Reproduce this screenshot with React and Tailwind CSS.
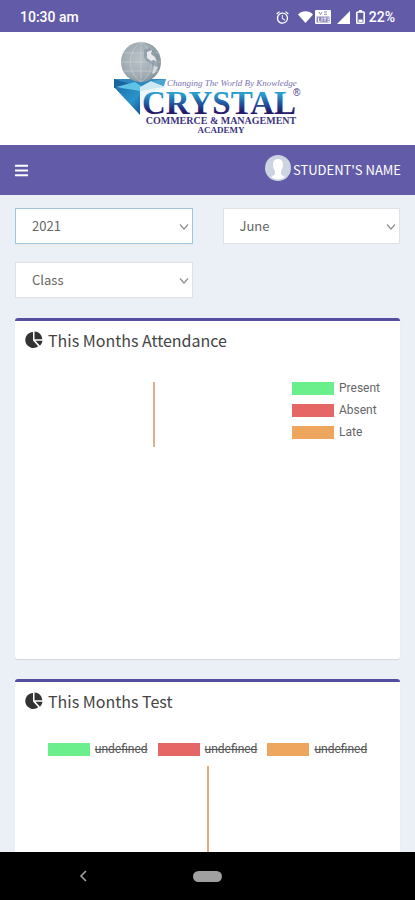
import { useState } from "react";
import { FaBars } from "react-icons/fa";
import { MdAlarm } from "react-icons/md";

const LEGEND_COLORS = {
    green: "bg-[#6bee8c]",
    red: "bg-[#e66565]",
    orange: "bg-[#eea65e]",
};

const attendanceLegend = [
    { color: "green", label: "Present" },
    { color: "red", label: "Absent" },
    { color: "orange", label: "Late" },
];

const testLegend = [
    { color: "green", label: "undefined" },
    { color: "red", label: "undefined" },
    { color: "orange", label: "undefined" },
];

const StatusBar = () => (
    <div className="flex h-8 shrink-0 items-center justify-between bg-[#625ca8] pl-5 pr-5 pt-0.5 font-['Roboto',sans-serif] text-sm font-medium text-white">
        <span>10:30 am</span>
        <div className="flex items-center">
            <MdAlarm size={15} className="mr-2" />
            <svg width="15" height="12" viewBox="0 0 15 12" fill="currentColor" aria-hidden="true">
                <path d="M7.500 12 0 3.400C4-.8 11-.8 15 3.400Z" />
            </svg>
            <svg width="16" height="14" viewBox="0 0 16 14" className="ml-0.5 mr-1.5" aria-hidden="true">
                <rect width="16" height="14" rx="1" fill="#fff" />
                <path d="M4 2 5.500 4.500 7 2M9 2h3M9 4.300h3" stroke="#8d88c4" fill="none" />
                <rect x="1.500" y="6.500" width="13" height="6" fill="#8d88c4" />
                <path d="M3.500 7.500v4h2M7 7.500v4M8.500 8h3M10 8v3.500M12.500 8h1.500M12.500 9.700h1.500M12.500 11.500h1.500" stroke="#fff" strokeWidth="0.900" fill="none" />
            </svg>
            <svg width="13" height="13" viewBox="0 0 13 13" fill="currentColor" className="mr-1.5" aria-hidden="true">
                <path d="M13 0V13H0Z" />
            </svg>
            <svg width="9" height="14" viewBox="0 0 9 14" aria-hidden="true">
                <path d="M3 0h3v2H3Z" fill="#fff" />
                <rect x="0.800" y="2" width="7.400" height="11.200" rx="0.800" stroke="#fff" strokeWidth="1.600" fill="none" />
                <path d="M2.500 9.500h4V12h-4Z" fill="#fff" />
            </svg>
            <span className="ml-1">22%</span>
        </div>
    </div>
);

const Logo = () => (
    <svg width="190" height="98" viewBox="0 0 190 98" role="img" aria-label="Crystal Commerce and Management Academy">
        <defs>
            <linearGradient id="word" x1="0" y1="0" x2="0" y2="1">
                <stop offset="0.25" stopColor="#2b9ed0" />
                <stop offset="0.5" stopColor="#2259a2" />
                <stop offset="0.75" stopColor="#231a68" />
            </linearGradient>
            <radialGradient id="globe" cx="0.45" cy="0.45" r="0.6">
                <stop offset="0" stopColor="#b9c2c7" />
                <stop offset="0.7" stopColor="#a0acb3" />
                <stop offset="1" stopColor="#7d8b93" />
            </radialGradient>
            <linearGradient id="gem" x1="0" y1="0" x2="1" y2="1">
                <stop offset="0" stopColor="#1a6fae" />
                <stop offset="0.6" stopColor="#2a93cb" />
                <stop offset="1" stopColor="#13528f" />
            </linearGradient>
        </defs>

        {/* crystal */}
        <path d="M1 46 27 49V74Z" fill="url(#gem)" />
        <path d="M1 38H53L50 46 27 50 1 47Z" fill="#2d86bd" />
        <path d="M1 38 27 46 1 47Z" fill="#1b659f" />
        <path d="M3 46 22 41 28 45 27 50Z" fill="#5fc3e6" />
        <path d="M27 46 38 40 53 46 27 50Z" fill="#cdeaf3" />
        <path d="M38 40 53 38 51 45Z" fill="#4aa5d0" />
        <path d="M27 50 50 46 32 56 27 72Z" fill="#eef8fb" />

        {/* globe */}
        <circle cx="28" cy="21" r="20" fill="url(#globe)" />
        <path
            d="M8 21h40M10.500 12h35M10.500 30h35M28 1v40M28 1C14 10 14 32 28 41M28 1C42 10 42 32 28 41"
            stroke="#ccd3d7"
            strokeWidth="0.600"
            fill="none"
        />
        <path d="M31 9 36 7 42 10 46 16 45 22 42 21 40 25 37 22 33 20 31 15Z" fill="#7b8a93" opacity="0.500" />
        <path d="M34 11 39 9 38 13 42 16 44 21 41 19 38 20 34 17Z" fill="#e6eaec" />
        <path d="M41 25 45 26 42 32 39 33Z" fill="#d5dbde" />

        <text x="54" y="45" fontFamily="'Liberation Serif', serif" fontStyle="italic" fontSize="9" fill="#7a72b3">
            Changing The World By Knowledge
        </text>
        <text x="29" y="73" fontFamily="'Liberation Serif', serif" fontWeight="700" fontSize="33" fill="url(#word)">
            CRYSTAL
        </text>
        <text x="180" y="55" fontFamily="'Liberation Sans', sans-serif" fontSize="10" fill="#3c357f">
            ®
        </text>
        <text x="108" y="83" textAnchor="middle" fontFamily="'Liberation Serif', serif" fontWeight="700" fontSize="10" fill="#3b357f">
            COMMERCE &amp; MANAGEMENT
        </text>
        <text x="108" y="92" textAnchor="middle" fontFamily="'Liberation Serif', serif" fontWeight="700" fontSize="9" fill="#3b357f">
            ACADEMY
        </text>
    </svg>
);

const Navbar = () => (
    <nav className="flex h-[50px] shrink-0 items-center justify-between bg-[#625ca8] px-3.5 text-white">
        <button aria-label="Toggle menu">
            <FaBars size={15} />
        </button>
        <a href="#profile" className="flex items-center gap-0.5 text-[13px]">
            <svg width="26" height="26" viewBox="0 0 26 26" className="-mt-1" aria-hidden="true">
                <circle cx="13" cy="13" r="13" fill="#ccd4e2" />
                <path d="M13 4C9.500 4 8 6.500 8 10c0 2.500.8 4.500 2 5.800v3.200c-1 1.500-2.500 1.800-4 3A11.500 11.500 0 0 0 20 22c-1.500-1.200-3-1.500-4-3v-3.200c1.200-1.300 2-3.300 2-5.800C18 6.500 16.500 4 13 4Z" fill="#fff" />
            </svg>
            <span>STUDENT'S NAME</span>
        </a>
    </nav>
);

const Select = ({ label, options, active }) => {
    const [value, setValue] = useState(options[0]);

    return (
        <div className="relative">
            <select
                aria-label={label}
                value={value}
                onChange={(e) => setValue(e.target.value)}
                className={`h-9 w-full appearance-none border bg-white pl-4 pr-8 text-[13px] text-[#666] outline-none ${active ? "border-[#9fc4dd]" : "border-[#dfe3e9]"}`}
            >
                {options.map((option) => (
                    <option key={option}>{option}</option>
                ))}
            </select>
            <svg width="10" height="6" viewBox="0 0 10 6" className="pointer-events-none absolute right-1 top-4" aria-hidden="true">
                <path d="M1 0.500 5 5 9 0.500" stroke="#8f8f8f" strokeWidth="1.200" fill="none" />
            </svg>
        </div>
    );
};

const PieIcon = () => (
    <svg width="18" height="18" viewBox="0 0 18 18" fill="#333" aria-hidden="true">
        <path d="M8 1A8 8 0 1 0 13.200 15.300L8 9.500Z" />
        <path d="M9.500 0.500A8 8 0 0 1 17.300 8.300H9.500Z" />
        <path d="M10.500 9.800H17.500A8 8 0 0 1 15 14.800Z" />
    </svg>
);

const LegendItem = ({ color, label, hidden }) => (
    <li className="flex items-center gap-[5px]">
        <span className={`h-[13px] w-[42px] ${LEGEND_COLORS[color]}`}></span>
        <span className={hidden ? "line-through" : ""}>{label}</span>
    </li>
);

const Box = ({ title, className, children }) => (
    <section className={`rounded-[3px] border-t-[3px] border-[#554d9f] bg-white px-2.5 shadow-[0_1px_1px_rgba(0,0,0,0.1)] ${className}`}>
        <h3 className="flex h-[38px] items-center gap-[5px] text-base text-[#444]">
            <PieIcon />
            {title}
        </h3>
        {children}
    </section>
);

const App = () => {
    return (
        <div className="flex h-screen flex-col overflow-hidden bg-[#ebeff6] font-['Noto_Sans_CJK_SC',sans-serif]">
            <StatusBar />

            <header className="flex shrink-0 justify-center bg-white pb-1.5 pt-[9px]">
                <Logo />
            </header>

            <Navbar />

            <main className="min-h-0 flex-1 overflow-hidden px-[15px] pt-[13px]">
                <div className="mb-5 grid grid-cols-2 gap-x-[30px] gap-y-[18px]">
                    <Select label="Year" options={["2021", "2020", "2019"]} active />
                    <Select label="Month" options={["June", "July", "August"]} />
                    <Select label="Class" options={["Class"]} />
                </div>

                {/* ATTENDANCE */}
                <Box title="This Months Attendance" className="mb-5 min-h-[341px]">
                    <div className="flex pt-[23px]">
                        <div className="flex flex-1 justify-center">
                            <div className="h-[65px] w-0.5 bg-[#e5ac8b]"></div>
                        </div>
                        <ul className="flex flex-col gap-[9px] px-2.5 font-['Roboto',sans-serif] text-xs leading-[13px] text-[#666]">
                            {attendanceLegend.map((item) => (
                                <LegendItem key={item.label} {...item} />
                            ))}
                        </ul>
                    </div>
                </Box>

                {/* TEST */}
                <Box title="This Months Test" className="min-h-[341px]">
                    <ul className="flex justify-center gap-2.5 pb-2.5 pt-[23px] font-['Roboto',sans-serif] text-xs leading-[13px] text-[#555]">
                        {testLegend.map((item) => (
                            <LegendItem key={item.color} {...item} hidden />
                        ))}
                    </ul>
                    <div className="mx-auto h-40 w-0.5 bg-[#e5ac7b]"></div>
                </Box>
            </main>

            {/* SYSTEM NAVIGATION */}
            <footer className="grid h-12 shrink-0 grid-cols-[2fr_1fr_2fr] items-center justify-items-center bg-black">
                <button aria-label="Back">
                    <svg width="8" height="12" viewBox="0 0 8 12" aria-hidden="true">
                        <path d="M7 1 2 6 7 11" stroke="#a3a3a3" strokeWidth="1.600" fill="none" />
                    </svg>
                </button>
                <button aria-label="Home" className="h-[11px] w-[29px] rounded-full bg-[#a0a0a0]"></button>
            </footer>
        </div>
    );
};

export default App;
